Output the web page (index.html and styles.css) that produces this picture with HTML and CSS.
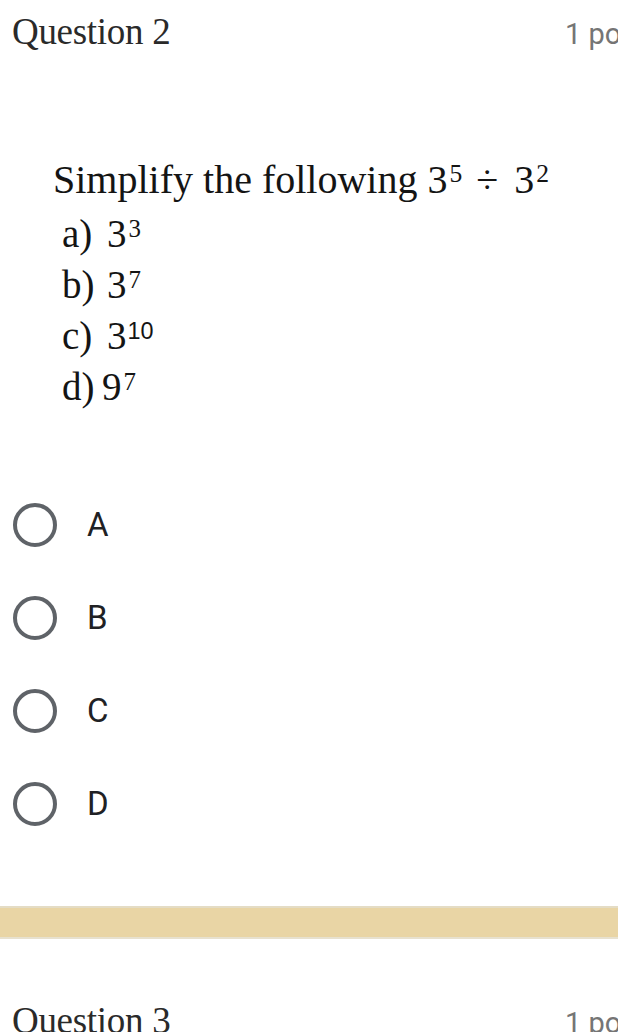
FILE: index.html
```html
<!DOCTYPE html>
<html lang="en">
<head>
<meta charset="utf-8">
<title>Quiz</title>
<link rel="stylesheet" href="styles.css">
</head>
<body>
<div class="page">
  <div class="q-header">
    <span class="q-title">Question 2</span>
    <span class="q-points">1 point</span>
  </div>

  <div class="q-image">
    <div class="q-prompt">Simplify the following 3<sup>5</sup><span class="op">÷</span>3<sup>2</sup></div>
    <div class="q-line"><span class="q-key">a)</span><span class="q-val">3<sup>3</sup></span></div>
    <div class="q-line"><span class="q-key">b)</span><span class="q-val">3<sup>7</sup></span></div>
    <div class="q-line"><span class="q-key">c)</span><span class="q-val">3<sup class="sans">10</sup></span></div>
    <div class="q-line"><span class="q-key">d)</span><span class="q-val tight">9<sup>7</sup></span></div>
  </div>

  <div class="options">
    <div class="option"><span class="radio"></span><span class="opt-label">A</span></div>
    <div class="option"><span class="radio"></span><span class="opt-label">B</span></div>
    <div class="option"><span class="radio"></span><span class="opt-label">C</span></div>
    <div class="option"><span class="radio"></span><span class="opt-label">D</span></div>
  </div>

  <div class="divider"></div>

  <div class="q-header next">
    <span class="q-title">Question 3</span>
    <span class="q-points">1 point</span>
  </div>
</div>
</body>
</html>
```

FILE: styles.css
```css
html, body {
  margin: 0;
  padding: 0;
  background: #ffffff;
}

.page {
  width: 618px;
  height: 1032px;
  overflow: hidden;
}

.q-header {
  display: flex;
  align-items: baseline;
  padding: 10px 0 0 12px;
}

.q-header.next {
  margin-top: 50px;
}

.q-title {
  flex: 1;
  font-family: "Liberation Serif", "DejaVu Serif", serif;
  font-size: 37px;
  line-height: 44px;
  color: #2a2a2a;
  letter-spacing: -0.3px;
}

.q-points {
  width: 53px;
  overflow: hidden;
  white-space: nowrap;
  font-family: Roboto, "Liberation Sans", sans-serif;
  font-size: 29px;
  color: #757575;
}

.q-image {
  margin-top: 97px;
  font-family: "Liberation Serif", "Times New Roman", serif;
  color: #141414;
}

.q-prompt {
  padding-left: 53px;
  font-size: 40px;
  line-height: 57px;
}

.op {
  margin: 0 16px 0 14px;
}

.q-line {
  padding-left: 62px;
  font-size: 39px;
  line-height: 51px;
  display: flex;
}

.q-key {
  width: 45px;
}

.q-val.tight {
  margin-left: -5px;
}

sup {
  font-size: 0.64em;
  line-height: 0;
  vertical-align: 0.42em;
  margin-left: 2px;
}

sup.sans {
  font-family: "Liberation Sans", Arial, sans-serif;
  font-size: 0.6em;
  margin-left: 1px;
}

.options {
  margin-top: 66px;
}

.option {
  display: flex;
  align-items: center;
  height: 93px;
  padding-left: 13px;
}

.radio {
  width: 44px;
  height: 44px;
  box-sizing: border-box;
  border: 4px solid #5f6368;
  border-radius: 50%;
  flex-shrink: 0;
}

.opt-label {
  margin-left: 30px;
  font-family: Roboto, "Liberation Sans", sans-serif;
  font-size: 33px;
  color: #202124;
}

.divider {
  margin-top: 56px;
  height: 29px;
  background: #e9d5a5;
  border-top: 2px solid #e4dcc5;
  border-bottom: 2px solid #e7e1cf;
}
```
